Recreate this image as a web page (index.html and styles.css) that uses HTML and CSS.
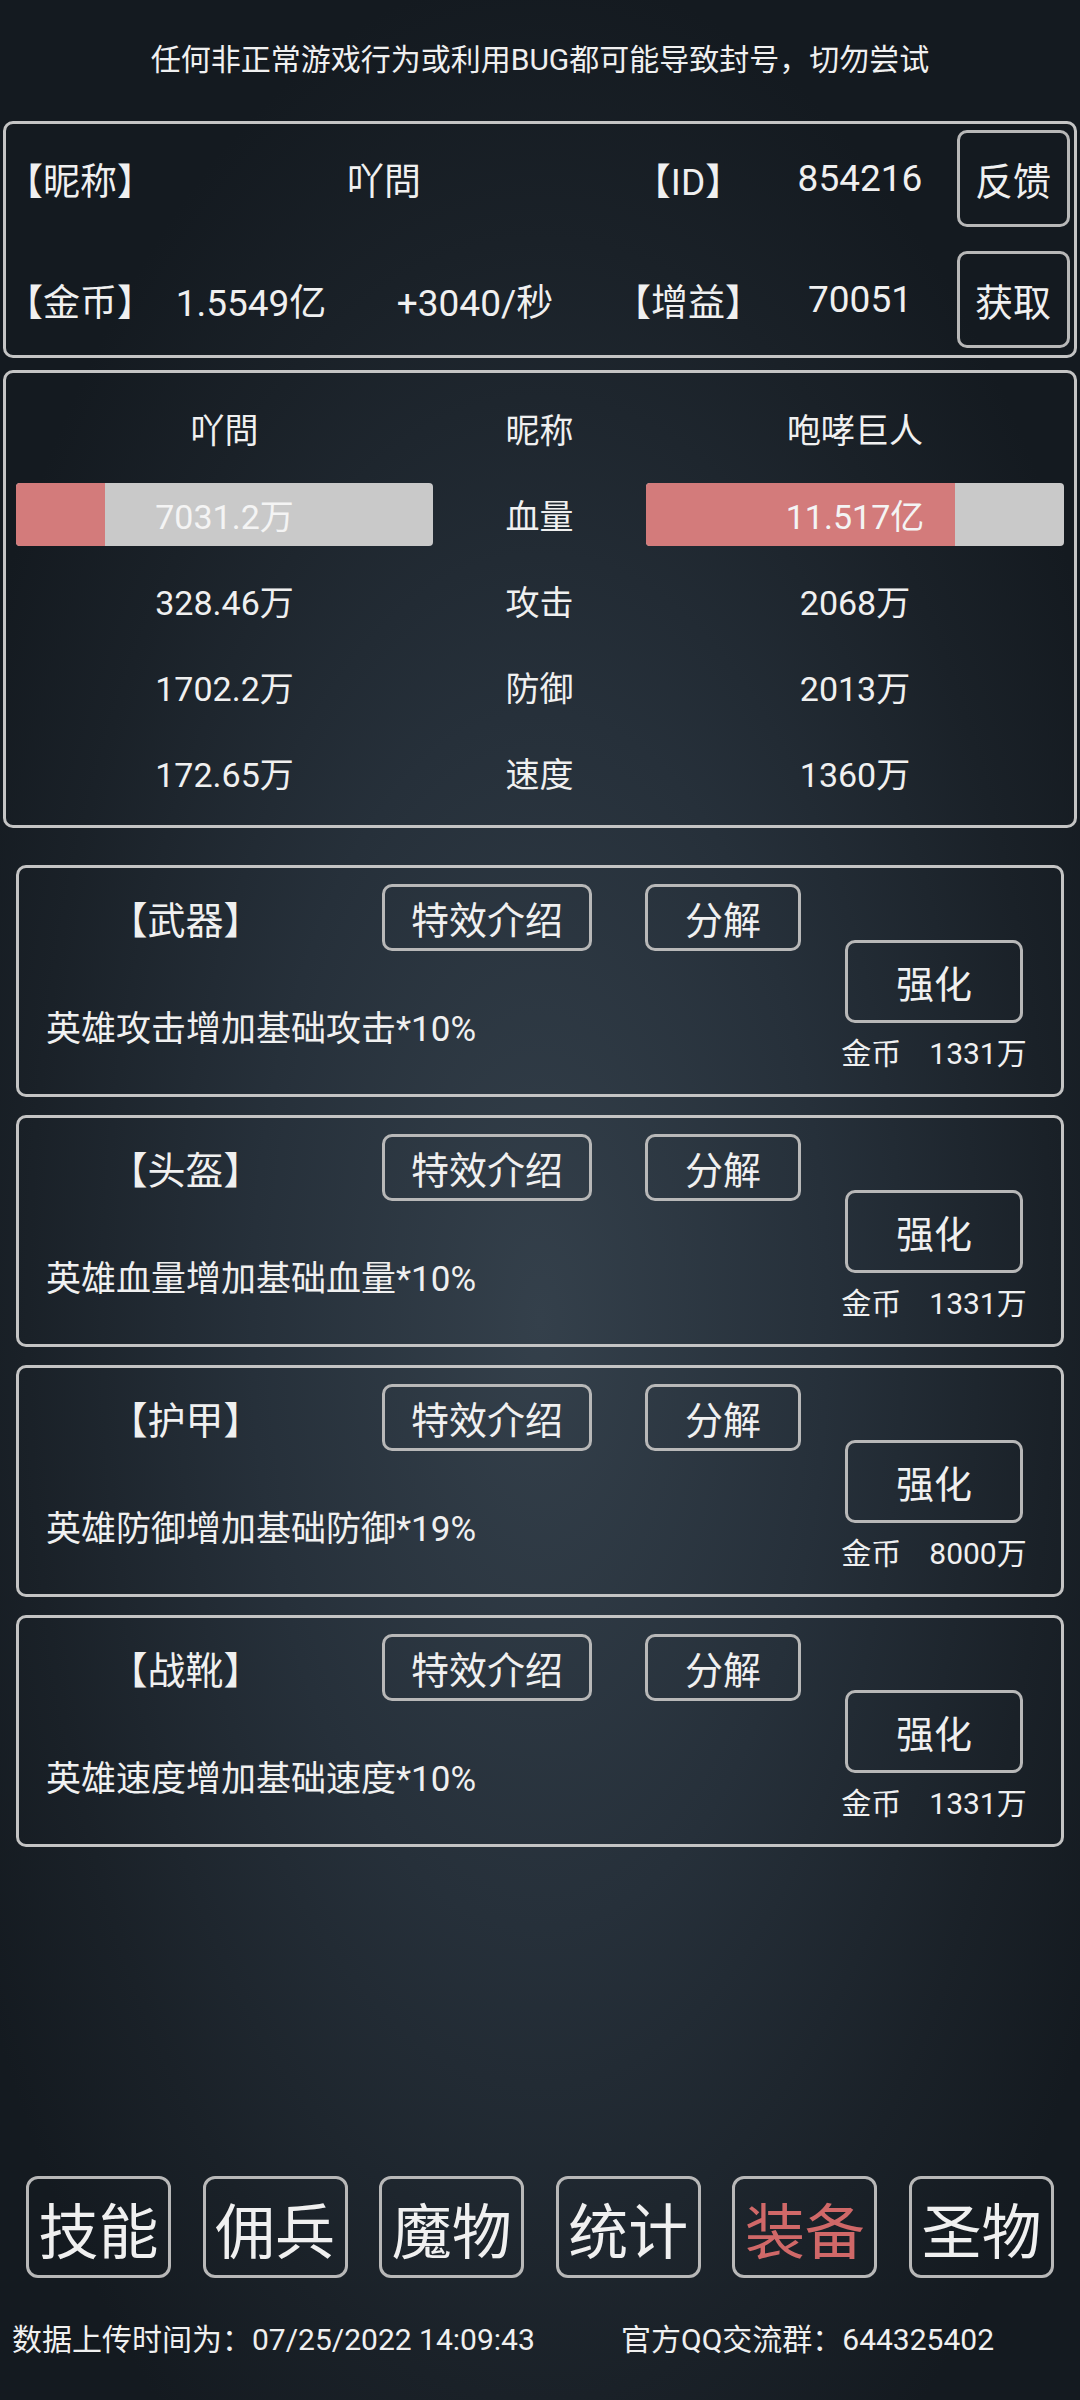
FILE: index.html
```html
<!DOCTYPE html>
<html lang="zh-CN">
  <head>
    <meta charset="UTF-8" />
    <meta name="viewport" content="width=device-width, initial-scale=1.0" />
    <title>装备</title>
    <link rel="stylesheet" href="styles.css">
  </head>
  <body>
    <div class="app">
      <p class="notice">任何非正常游戏行为或利用BUG都可能导致封号，切勿尝试</p>

      <section class="panel profile">
        <span class="label">【昵称】</span>
        <span class="val name">吖問</span>
        <span class="val">【ID】</span>
        <span class="val">854216</span>
        <button class="btn btn-side">反馈</button>

        <span class="label">【金币】</span>
        <span class="val">1.5549亿</span>
        <span class="val">+3040/秒</span>
        <span class="val">【增益】</span>
        <span class="val">70051</span>
        <button class="btn btn-side">获取</button>
      </section>

      <section class="panel stats">
        <span>吖問</span>
        <span>昵称</span>
        <span>咆哮巨人</span>

        <div class="bar"><div class="fill" style="width: 21.3%"></div><span class="bar-text">7031.2万</span></div>
        <span>血量</span>
        <div class="bar"><div class="fill" style="width: 74%"></div><span class="bar-text">11.517亿</span></div>

        <span>328.46万</span>
        <span>攻击</span>
        <span>2068万</span>

        <span>1702.2万</span>
        <span>防御</span>
        <span>2013万</span>

        <span>172.65万</span>
        <span>速度</span>
        <span>1360万</span>
      </section>

      <div class="cards">
        <div class="card">
          <div class="card-main">
            <div class="card-head">
              <span class="card-title">【武器】</span>
              <button class="btn btn-info">特效介绍</button>
              <button class="btn btn-split">分解</button>
            </div>
            <p class="card-desc">英雄攻击增加基础攻击*10%</p>
          </div>
          <div class="card-side">
            <button class="btn btn-up">强化</button>
            <p class="cost"><span>金币</span><span class="cost-num">1331万</span></p>
          </div>
        </div>

        <div class="card">
          <div class="card-main">
            <div class="card-head">
              <span class="card-title">【头盔】</span>
              <button class="btn btn-info">特效介绍</button>
              <button class="btn btn-split">分解</button>
            </div>
            <p class="card-desc">英雄血量增加基础血量*10%</p>
          </div>
          <div class="card-side">
            <button class="btn btn-up">强化</button>
            <p class="cost"><span>金币</span><span class="cost-num">1331万</span></p>
          </div>
        </div>

        <div class="card">
          <div class="card-main">
            <div class="card-head">
              <span class="card-title">【护甲】</span>
              <button class="btn btn-info">特效介绍</button>
              <button class="btn btn-split">分解</button>
            </div>
            <p class="card-desc">英雄防御增加基础防御*19%</p>
          </div>
          <div class="card-side">
            <button class="btn btn-up">强化</button>
            <p class="cost"><span>金币</span><span class="cost-num">8000万</span></p>
          </div>
        </div>

        <div class="card">
          <div class="card-main">
            <div class="card-head">
              <span class="card-title">【战靴】</span>
              <button class="btn btn-info">特效介绍</button>
              <button class="btn btn-split">分解</button>
            </div>
            <p class="card-desc">英雄速度增加基础速度*10%</p>
          </div>
          <div class="card-side">
            <button class="btn btn-up">强化</button>
            <p class="cost"><span>金币</span><span class="cost-num">1331万</span></p>
          </div>
        </div>
      </div>

      <nav class="nav">
        <button class="btn nav-btn">技能</button>
        <button class="btn nav-btn">佣兵</button>
        <button class="btn nav-btn">魔物</button>
        <button class="btn nav-btn">统计</button>
        <button class="btn nav-btn active">装备</button>
        <button class="btn nav-btn">圣物</button>
      </nav>

      <footer class="footer">
        <span>数据上传时间为：07/25/2022 14:09:43</span>
        <span>官方QQ交流群：644325402</span>
      </footer>
    </div>
  </body>
</html>
```

FILE: styles.css
```css
html,
body {
  margin: 0;
  padding: 0;
}
body {
  font-family: Roboto, "Noto Sans CJK SC", sans-serif;
  color: #f0f0f0;
  background-color: #151b21;
  background-image: radial-gradient(
    ellipse 640px 1350px at 50% 55%,
    #34404b 0%,
    #26303a 45%,
    #1a2128 80%,
    #141a20 100%
  );
  min-height: 2400px;
}
p {
  margin: 0;
}
.app {
  min-height: 2400px;
  display: flex;
  flex-direction: column;
}
.notice {
  padding: 40px 0 41px;
  line-height: 40px;
  font-size: 30px;
  text-align: center;
}
.panel {
  margin: 0 3px;
  border: 3px solid #c4c4c4;
  border-radius: 10px;
  box-sizing: border-box;
}
.btn {
  font-family: inherit;
  color: #f0f0f0;
  background: transparent;
  border: 3px solid #b8b8b8;
  border-radius: 10px;
  padding: 0;
  box-sizing: border-box;
  cursor: pointer;
}

/* profile */
.profile {
  height: 237px;
  padding: 6px 0 7px;
  display: grid;
  grid-template-columns: 154px 182px 266px 160px 184px 122px;
  grid-template-rows: 97px 97px;
  row-gap: 24px;
  align-items: center;
  font-size: 37px;
}
.profile .label {
  white-space: nowrap;
}
.profile .val {
  text-align: center;
  white-space: nowrap;
}
.profile .name {
  grid-column: span 2;
}
.btn-side {
  width: 113px;
  height: 97px;
  font-size: 38px;
  justify-self: center;
}

/* stats */
.stats {
  margin-top: 12px;
  height: 458px;
  padding: 12px 10px 10px;
  display: grid;
  grid-template-columns: 417px 213px 418px;
  grid-auto-rows: 86px;
  align-items: center;
  justify-items: center;
  font-size: 34px;
}
.bar {
  position: relative;
  width: 100%;
  height: 63px;
  background-color: #c9c9c9;
  border-radius: 4px;
  overflow: hidden;
  display: flex;
  align-items: center;
  justify-content: center;
}
.fill {
  position: absolute;
  left: 0;
  top: 0;
  bottom: 0;
  background-color: #d37b7b;
}
.bar-text {
  position: relative;
  color: #f4f4f4;
}

/* equipment cards */
.cards {
  margin: 37px 16px 0;
  display: flex;
  flex-direction: column;
  gap: 18px;
}
.card {
  height: 232px;
  border: 3px solid #c4c4c4;
  border-radius: 10px;
  box-sizing: border-box;
  display: flex;
}
.card-main {
  width: 826px;
  padding-top: 16px;
}
.card-head {
  display: flex;
  align-items: center;
  height: 67px;
}
.card-title {
  width: 333px;
  text-align: center;
  font-size: 38px;
}
.btn-info {
  margin-left: 30px;
  width: 210px;
  height: 67px;
  font-size: 38px;
}
.btn-split {
  margin-left: 53px;
  width: 156px;
  height: 67px;
  font-size: 38px;
}
.card-desc {
  margin: 59px 0 0 27px;
  font-size: 35px;
  line-height: 40px;
}
.card-side {
  width: 178px;
  padding-top: 72px;
  display: flex;
  flex-direction: column;
  align-items: center;
}
.btn-up {
  width: 178px;
  height: 83px;
  font-size: 38px;
}
.cost {
  margin-top: 15px;
  font-size: 30px;
  line-height: 32px;
  white-space: nowrap;
}
.cost-num {
  margin-left: 28px;
}

/* bottom nav */
.nav {
  margin-top: auto;
  padding: 0 26px;
  display: flex;
  justify-content: space-between;
}
.nav-btn {
  width: 145px;
  height: 102px;
  font-size: 60px;
  border-radius: 12px;
}
.nav-btn.active {
  color: #d06868;
}
.footer {
  margin-top: 42px;
  padding: 0 0 40px 12px;
  display: grid;
  grid-template-columns: 609px 1fr;
  font-size: 30px;
  line-height: 40px;
  white-space: nowrap;
}
```
